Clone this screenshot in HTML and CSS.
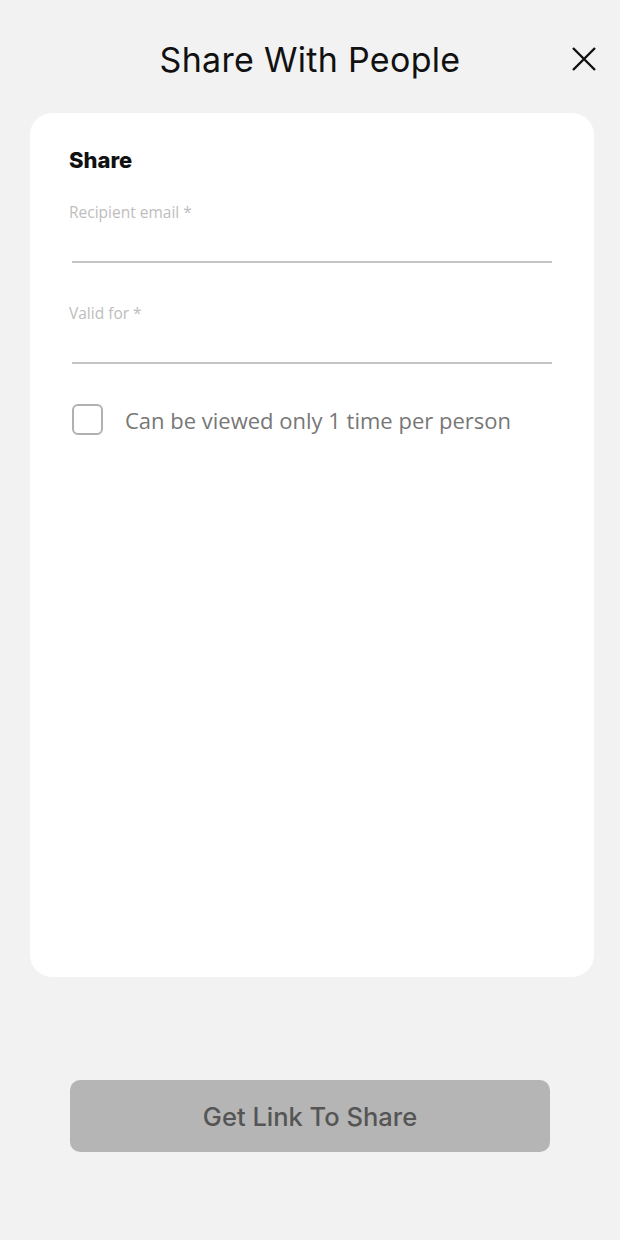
FILE: index.html
```html
<!DOCTYPE html>
<html lang="en">
<head>
    <meta charset="UTF-8">
    <meta name="viewport" content="width=device-width, initial-scale=1.0">
    <title>Share With People</title>
    <link rel="stylesheet" href="styles.css">
</head>
<body>
    <div class="screen">
        <header class="top-bar">
            <h1 class="title">Share With People</h1>
            <button class="close-btn" aria-label="Close">
                <svg width="26" height="26" viewBox="0 0 26 26">
                    <path d="M2 2 L24 24 M24 2 L2 24" stroke="#111" stroke-width="2.4" fill="none"/>
                </svg>
            </button>
        </header>

        <div class="card">
            <h2 class="card-title">Share</h2>

            <div class="field">
                <label class="field-label">Recipient email *</label>
                <div class="field-line"></div>
            </div>

            <div class="field">
                <label class="field-label">Valid for *</label>
                <div class="field-line"></div>
            </div>

            <div class="check-row">
                <span class="check-box"></span>
                <span class="check-text">Can be viewed only 1 time per person</span>
            </div>
        </div>

        <div class="footer">
            <button class="share-btn">Get Link To Share</button>
        </div>
    </div>
</body>
</html>
```

FILE: styles.css
```css
body {
    margin: 0;
    background-color: #f1f2f1;
    font-family: "Open Sans", sans-serif;
}

.screen {
    width: 620px;
    height: 1240px;
    display: flex;
    flex-direction: column;
}

.top-bar {
    height: 113px;
    display: flex;
    align-items: center;
    justify-content: center;
    position: relative;
}

.title {
    margin: 6px 0 0 0;
    font-family: "Inter", sans-serif;
    font-weight: 400;
    font-size: 34px;
    color: #111;
    letter-spacing: 0.3px;
}

.close-btn {
    position: absolute;
    right: 23px;
    top: 46px;
    border: none;
    background: none;
    padding: 0;
    cursor: pointer;
}

.close-btn svg {
    display: block;
}

.card {
    margin: 0 26px 0 30px;
    height: 864px;
    box-sizing: border-box;
    background-color: #ffffff;
    border-radius: 22px;
    padding: 32px 42px 0 39px;
}

.card-title {
    margin: 0 0 27px 0;
    font-family: "Inter", sans-serif;
    font-weight: 800;
    font-size: 22px;
    line-height: 30px;
    color: #111;
}

.field {
    margin-bottom: 40px;
}

.field-label {
    display: block;
    font-size: 15.5px;
    color: #bdbdbd;
    line-height: 20px;
}

.field-line {
    margin: 39px 0 0 3px;
    height: 2px;
    background-color: #c4c4c4;
}

.check-row {
    display: flex;
    align-items: center;
    gap: 22px;
    margin-left: 3px;
}

.check-box {
    width: 27px;
    height: 27px;
    border: 2px solid #b0b0b0;
    border-radius: 6px;
}

.check-text {
    font-size: 22px;
    color: #777;
}

.footer {
    flex: 1;
    display: flex;
    justify-content: center;
    padding-top: 103px;
}

.share-btn {
    width: 480px;
    height: 72px;
    border: none;
    border-radius: 10px;
    background-color: #b5b5b5;
    color: #555;
    font-family: "Inter", sans-serif;
    font-size: 25.5px;
    font-weight: 500;
    cursor: pointer;
}
```
